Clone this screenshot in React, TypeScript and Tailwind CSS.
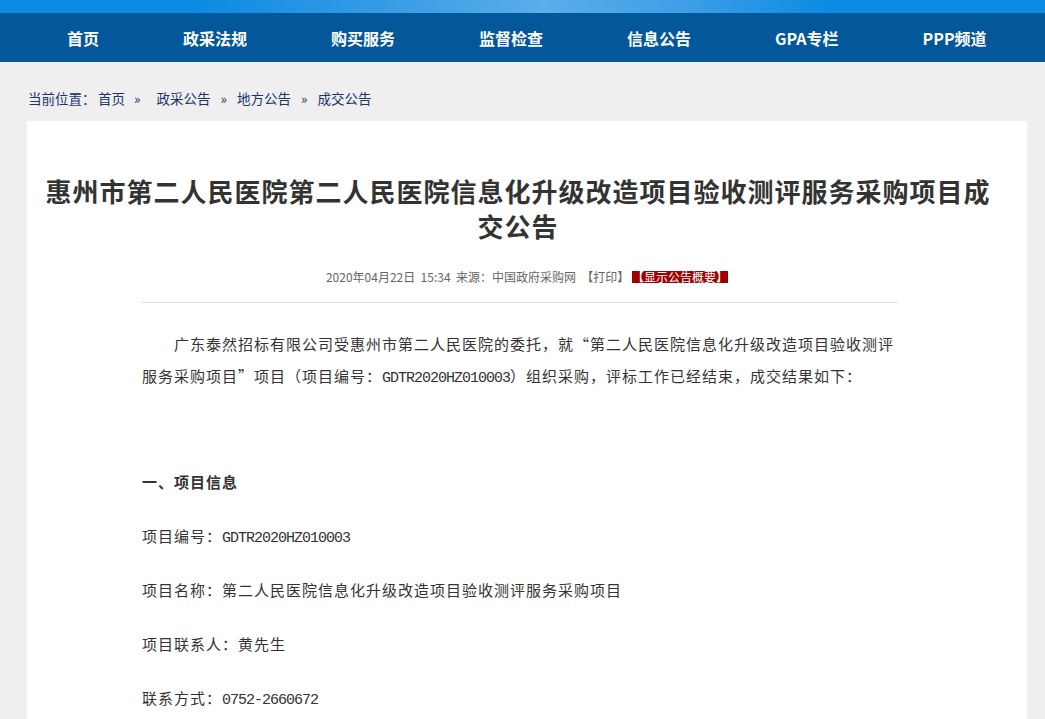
const navItems = ["首页", "政采法规", "购买服务", "监督检查", "信息公告", "GPA专栏", "PPP频道"];

const crumbs = ["政采公告", "地方公告", "成交公告"];

function Latin({ children }: { children: React.ReactNode }) {
  return (
    <span className="text-[15px] leading-[0] tracking-[-1px] [font-family:'Liberation_Mono',monospace]">
      {children}
    </span>
  );
}

export default function App() {
  return (
    <div
      lang="zh-CN"
      className="min-h-screen bg-[#efefef] pb-10 [font-family:'Noto_Sans_CJK_SC','Noto_Sans',sans-serif]"
    >
      <div className="h-[13px] bg-[linear-gradient(90deg,#0a8ae2_0%,#0a8ae2_18%,#3f9fe6_40%,#5aaeea_52%,#3d9ee7_66%,#0a8ae2_80%,#0a8ae2_100%)]" />
      <nav className="flex h-[49px] items-center gap-[84px] bg-[#03579b] pl-[67px]">
        {navItems.map((item) => (
          <a key={item} className="text-[16px] font-bold leading-none text-white">
            {item}
          </a>
        ))}
      </nav>

      <div className="ml-[27px] w-[1000px]">
        <div className="flex h-[59px] items-center pl-px pt-[14px] text-[13.5px] text-[#1a3568]">
          <span className="inline-block w-[70px]">当前位置：</span>
          <a>首页</a>
          <span className="ml-[9px] mr-[16px]">»</span>
          {crumbs.map((c, i) => (
            <span key={c} className="flex items-center">
              <a>{c}</a>
              {i < crumbs.length - 1 && <span className="mx-[10px]">»</span>}
            </span>
          ))}
        </div>

        <div className="bg-white pb-16">
          <h1 className="pl-[16px] pr-[34px] pt-[52px] text-center text-[26px] font-bold leading-[35px] tracking-[1px] text-[#333]">
            惠州市第二人民医院第二人民医院信息化升级改造项目验收测评服务采购项目成交公告
          </h1>

          <div className="mt-[24px] flex items-center justify-center text-[12px] leading-[20px] text-[#666]">
            <span>2020年04月22日&nbsp; 15:34&nbsp; 来源：中国政府采购网 &nbsp;【打印】&nbsp;</span>
            <span className="bg-[#a00000] leading-[12px] text-white">【显示公告概要】</span>
          </div>

          <div className="ml-[115px] mr-[130px] mt-[15px] border-t border-[#dddddd]" />

          <div className="ml-[115px] mr-[130px] pt-[25px] text-[15px] leading-[32px] tracking-[1px] text-[#333]">
            <p className="mb-[22px] indent-[32px]">
              广东泰然招标有限公司受惠州市第二人民医院的委托，就“第二人民医院信息化升级改造项目验收测评服务采购项目”项目（项目编号：
              <Latin>GDTR2020HZ010003</Latin>）组织采购，评标工作已经结束，成交结果如下：
            </p>
            <p className="mb-[20px]">&nbsp;</p>
            <p className="mb-[22px] font-bold">一、项目信息</p>
            <p className="mb-[22px]">
              项目编号：<Latin>GDTR2020HZ010003</Latin>
            </p>
            <p className="mb-[22px]">项目名称：第二人民医院信息化升级改造项目验收测评服务采购项目</p>
            <p className="mb-[22px]">项目联系人：黄先生</p>
            <p className="mb-[22px]">
              联系方式：<Latin>0752-2660672</Latin>
            </p>
            <p className="mb-[22px]">&nbsp;</p>
            <p className="mb-[22px] font-bold">二、采购单位信息</p>
            <p className="mb-[22px]">采购单位：惠州市第二人民医院</p>
          </div>
        </div>
      </div>
    </div>
  );
}
